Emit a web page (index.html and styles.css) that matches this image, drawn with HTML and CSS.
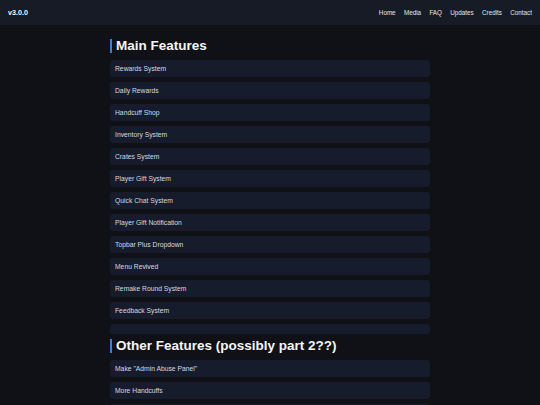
FILE: index.html
```html
<!DOCTYPE html>
<html lang="en">
<head>
<meta charset="utf-8">
<title>v3.0.0</title>
<link rel="stylesheet" href="styles.css">
</head>
<body>
<header class="topbar">
  <div class="brand">v3.0.0</div>
  <nav class="nav">
    <a href="#">Home</a>
    <a href="#">Media</a>
    <a href="#">FAQ</a>
    <a href="#">Updates</a>
    <a href="#">Credits</a>
    <a href="#">Contact</a>
  </nav>
</header>
<main class="content">
  <h2 class="section-title">Main Features</h2>
  <ul class="list">
    <li class="item">Rewards System</li>
    <li class="item">Daily Rewards</li>
    <li class="item">Handcuff Shop</li>
    <li class="item">Inventory System</li>
    <li class="item">Crates System</li>
    <li class="item">Player Gift System</li>
    <li class="item">Quick Chat System</li>
    <li class="item">Player Gift Notification</li>
    <li class="item">Topbar Plus Dropdown</li>
    <li class="item">Menu Revived</li>
    <li class="item">Remake Round System</li>
    <li class="item">Feedback System</li>
    <li class="item item-empty"></li>
  </ul>
  <h2 class="section-title">Other Features (possibly part 2??)</h2>
  <ul class="list">
    <li class="item">Make "Admin Abuse Panel"</li>
    <li class="item">More Handcuffs</li>
    <li class="item"></li>
  </ul>
</main>
</body>
</html>
```
FILE: styles.css
```css
html, body {
  margin: 0;
  padding: 0;
}
body {
  background: #0f1117;
  color: #e5e7eb;
  font-family: "Liberation Sans", Arial, sans-serif;
}
.topbar {
  height: 25px;
  background: #161b25;
  display: flex;
  align-items: center;
  justify-content: space-between;
  padding: 0 8px 0 8px;
  box-sizing: border-box;
}
.brand {
  font-weight: bold;
  font-size: 7.2px;
  color: #f3f4f6;
}
.nav {
  display: flex;
  gap: 8.3px;
}
.nav a {
  color: #e5e7eb;
  text-decoration: none;
  font-size: 6.3px;
}
.content {
  width: 320px;
  margin: 0 auto;
  padding-top: 14px;
}
.section-title {
  margin: 0 0 7px 0;
  font-size: 13.5px;
  line-height: 14px;
  font-weight: bold;
  color: #f5f5f5;
  border-left: 2.5px solid #3f80cc;
  padding-left: 4px;
}
.list {
  list-style: none;
  margin: 0;
  padding: 0;
}
.item {
  background: #161c2b;
  border-radius: 3px;
  height: 17px;
  line-height: 17px;
  padding: 0 5px;
  margin-bottom: 5px;
  font-size: 6.75px;
  color: #d6d9e0;
}
.item-empty {
  height: 10px;
}
```
